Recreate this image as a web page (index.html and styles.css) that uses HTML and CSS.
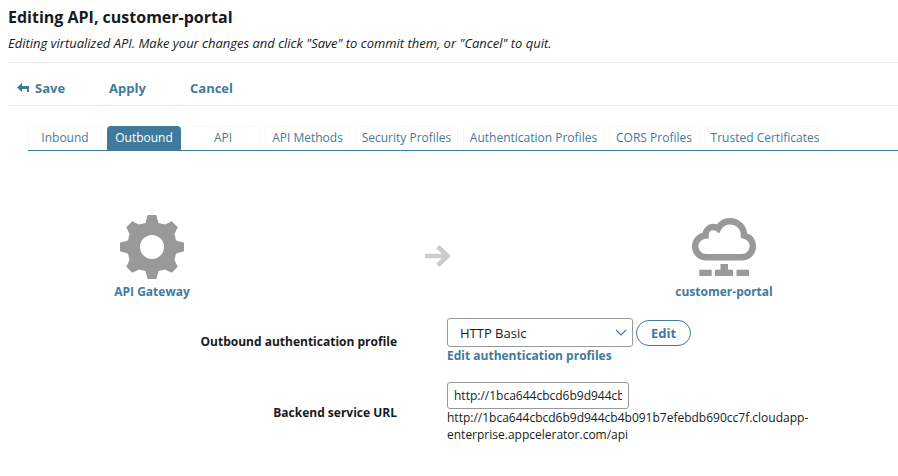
FILE: index.html
```html
<!DOCTYPE html>
<html lang="en">
<head>
<meta charset="utf-8">
<title>Editing API</title>
<link rel="stylesheet" href="styles.css">
</head>
<body>
<header class="head">
  <h1>Editing API, customer-portal</h1>
  <p>Editing virtualized API. Make your changes and click "Save" to commit them, or "Cancel" to quit.</p>
</header>
<nav class="actions">
  <a class="save"><svg width="12" height="10" viewBox="0 0 12 10"><path d="M0 4.5 5 0v3h7v6h-2V6H5v3z" fill="#3f7a9d"/></svg>Save</a>
  <a class="apply">Apply</a>
  <a>Cancel</a>
</nav>
<nav class="tabs">
  <a>Inbound</a>
  <a class="active">Outbound</a>
  <a>API</a>
  <a class="methods">API Methods</a>
  <a class="security">Security Profiles</a>
  <a class="auth">Authentication Profiles</a>
  <a class="cors">CORS Profiles</a>
  <a class="trusted">Trusted Certificates</a>
</nav>
<main>
  <section class="flow">
    <div class="node">
      <svg width="64" height="64" viewBox="0 0 64 64"><path fill="#999" fill-rule="evenodd" d="M27.700 0h8.600l2.200 8 6.500 1.500 6.700-3.200 6 6-3.200 6.700L56 25.500l8 2.200v8.600l-8 2.200-1.500 6.500 3.200 6.700-6 6-6.700-3.200-6.500 1.500-2.200 8h-8.600l-2.200-8-6.500-1.500-6.700 3.200-6-6L9.500 45 8 38.500l-8-2.200v-8.600l8-2.200L9.500 19l-3.200-6.700 6-6L19 9.500 25.500 8zM32 20a12 12 0 1 0 0 24 12 12 0 0 0 0-24z"/></svg>
      <span>API Gateway</span>
    </div>
    <svg class="arrow" width="28" height="24" viewBox="0 0 28 24"><path d="M0 12h23M12.800 2.600 22.500 12l-9.700 9.400" fill="none" stroke="#ccc" stroke-width="4.700"/></svg>
    <div class="node portal">
      <svg width="64" height="60" viewBox="0 0 64 60"><path fill="none" stroke="#999" stroke-width="6.400" d="M14 39.200C8 39.200 3.200 34.500 3.200 28.500S7.500 18 13.500 17.500C13.500 12.500 17 9 21.500 9c2 0 3.500.8 4.500 1.600C28.500 6 33 3.200 38 3.200c8 0 14 6.300 14 14.300 5.500 1.500 8.800 5.500 8.800 11 0 6-4.800 10.700-10.800 10.700z"/><path fill="#999" d="M7.300 51.700h12.400V58H7.300zM23 51.700h5.500V46H36v5.700h5V58H23zM44.500 51.700H57V58H44.500z"/></svg>
      <span>customer-portal</span>
    </div>
  </section>
  <section class="form">
    <label class="l1">Outbound authentication profile</label>
    <div class="field">
      <div class="row">
        <div class="select"><span>HTTP Basic</span><svg width="12" height="8" viewBox="0 0 12 8"><path d="M1 1l5 5 5-5" fill="none" stroke="#3f7a9d" stroke-width="1.200"/></svg></div>
        <button>Edit</button>
      </div>
      <a class="link">Edit authentication profiles</a>
    </div>
    <label class="l2">Backend service URL</label>
    <div class="field url">
      <div class="input"><span>http://1bca644cbcd6b9d944cb4b091b7efebdb690cc7f</span></div>
      <p>http://1bca644cbcd6b9d944cb4b091b7efebdb690cc7f.cloudapp-<br>enterprise.appcelerator.com/api</p>
    </div>
  </section>
</main>
</body>
</html>
```
FILE: styles.css
```css
* { box-sizing: border-box; }
body { margin: 0 0 0 8px; height: 476px; overflow: hidden; background: #fff; color: #151b20; font: 12px/17px "Open Sans", sans-serif; }
h1, p { margin: 0; }
svg { display: block; flex: none; }
.head { height: 63px; padding-top: 6px; border-bottom: 1px solid #e8e8e8; }
h1 { font-size: 16px; line-height: 22px; font-weight: 700; }
.head p { margin-top: 6px; font-size: 13px; line-height: 18px; letter-spacing: -0.01px; font-style: italic; white-space: nowrap; }
.actions { height: 43px; display: flex; align-items: center; padding: 8px 0 0 9px; border-bottom: 1px solid #e8e8e8; color: #3f7a9d; font-size: 13px; font-weight: 700; }
.actions a { display: flex; align-items: center; gap: 6px; }
.save { width: 92px; }
.apply { width: 81px; }
.tabs { margin: 20px 0 0 20px; height: 25px; display: flex; gap: 5px; border-bottom: 1px solid #3f7a9d; color: #3f7a9d; }
.tabs a { width: 74px; height: 24px; border: 1px solid #f7f7f7; border-bottom: 0; border-radius: 4px 4px 0 0; text-align: center; line-height: 22px; white-space: nowrap; }
.tabs .active { background: #3f7a9d; color: #fff; border-color: #3f7a9d; }
.tabs .methods { width: 85px; }
.tabs .security { width: 103px; }
.tabs .auth { width: 141px; }
.tabs .cors { width: 90px; }
.tabs .trusted { width: 122px; }
.flow { display: flex; padding: 64px 0 0 84px; height: 167px; }
.node { width: 120px; display: flex; flex-direction: column; align-items: center; color: #3f7a9d; font-weight: 700; }
.node span { margin-top: 4px; white-space: nowrap; }
.arrow { margin: 29px 0 0 213px; }
.portal { margin-left: 211px; padding-top: 3px; }
.portal span { margin-top: 5px; }
.form { display: grid; grid-template-columns: 389px 1fr; column-gap: 50px; grid-template-rows: 64px auto; }
label { text-align: right; font-weight: 700; padding-top: 15px; }
.l2 { padding-top: 22px; }
.row { display: flex; align-items: center; gap: 3px; }
.select { width: 186px; height: 29px; border: 1px solid #999; border-radius: 3px; display: flex; align-items: center; justify-content: space-between; padding: 1px 5px 0 12px; font-size: 13px; }
button { width: 55px; height: 26px; border: 1px solid #3f7a9d; border-radius: 13px; background: #fff; color: #3f7a9d; font: 700 13px/22px "Open Sans", sans-serif; padding: 0; }
.link { display: block; color: #3f7a9d; font-weight: 700; }
.input { width: 182px; height: 27px; border: 1px solid #999; border-radius: 3px; padding: 4px 6px 0; }
.input span { display: block; overflow: hidden; white-space: nowrap; }
```
